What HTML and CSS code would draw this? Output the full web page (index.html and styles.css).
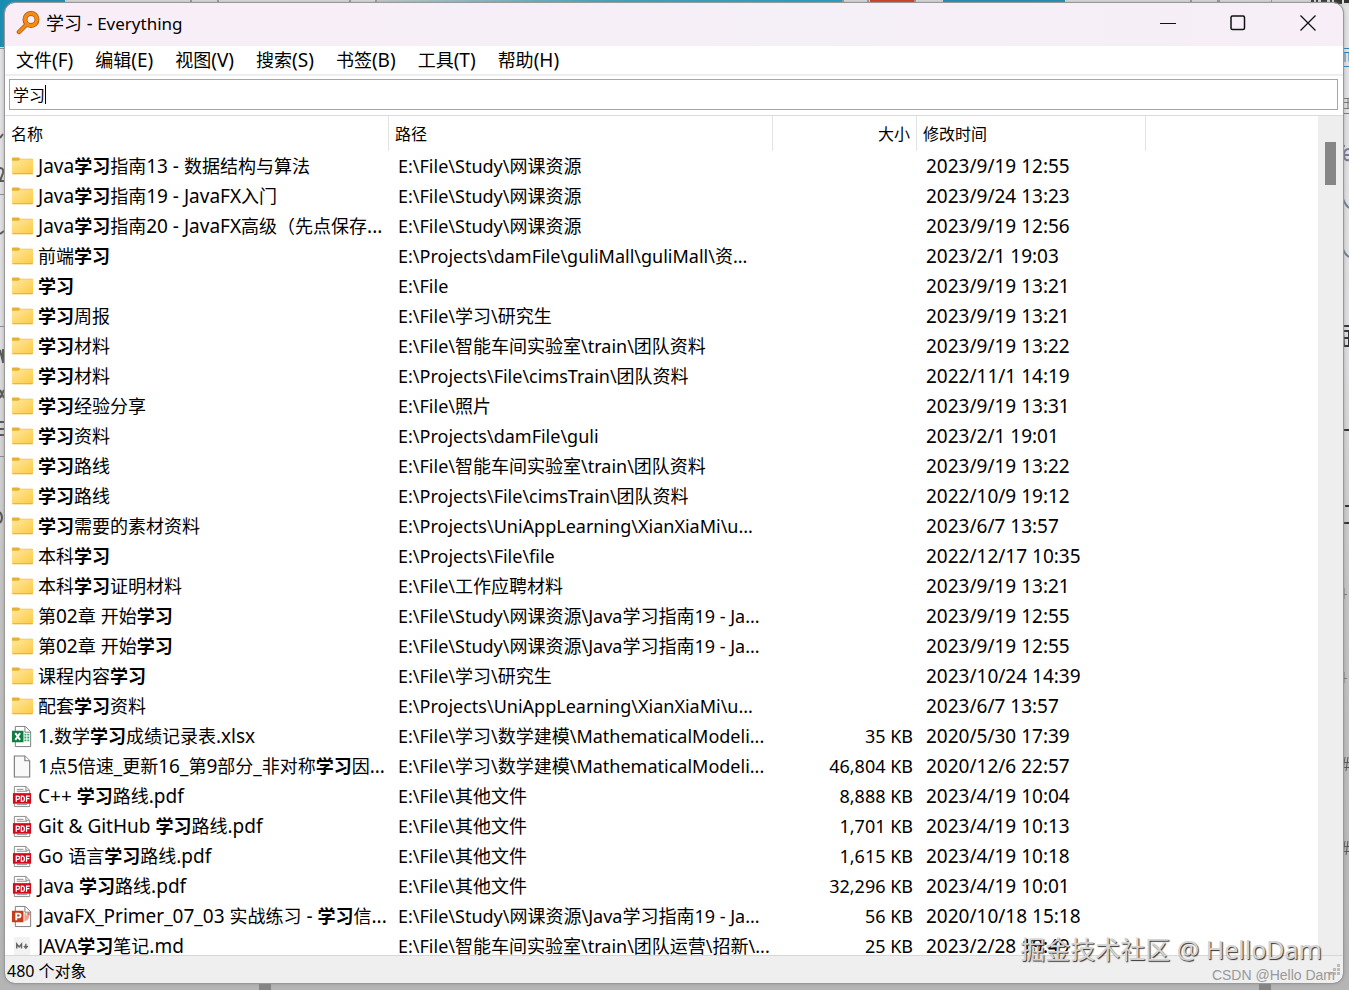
FILE: index.html
```html
<!DOCTYPE html>
<html lang="zh-CN">
<head>
<meta charset="utf-8">
<title>学习 - Everything</title>
<link rel="stylesheet" href="styles.css">
</head>
<body>
<svg class="edge edge-top" viewBox="0 0 1349 6" preserveAspectRatio="none" aria-hidden="true">
  <defs><linearGradient id="tab" x1="0" x2="1"><stop offset="0" stop-color="#c5ceca"/><stop offset=".5" stop-color="#39a4c0"/><stop offset="1" stop-color="#1c9cc4"/></linearGradient></defs>
  <path fill="#dcdcdc" d="M0 0h1349v6H0z"/>
  <path fill="#178db3" d="M0 0h65v6H0zM943 0h122v6H943z"/>
  <path fill="url(#tab)" d="M377 0h465v6H377z"/>
  <path fill="#d23a1b" d="M870 0h44v6h-44z"/>
  <path fill="#999" d="M190 0h2v6h-2zM217 0h2v6h-2zM349 0h2v6h-2zM375 0h2v6h-2zM842 0h2v6h-2zM867 0h2v6h-2zM914 0h2v6h-2zM1190 0h2v6h-2zM1217 0h3v6h-3zM1271 0h1v6h-1z"/>
  <path fill="#333" d="M1311 0h3v4h-3zM1316 0h2v4h-2zM1321 0h6v3h-6zM1330 0h2v5h-2zM1334 0h8v4h-8zM1344 0h5v3h-5z"/>
</svg>
<svg class="edge edge-left" width="8" height="990" aria-hidden="true">
  <path fill="#178db3" d="M0 0h8v47H0z"/>
  <path fill="none" stroke="#8a8d91" d="M0 48.500h5M0 194.500h5M0 326.500h5M0 456.500h5"/>
  <path fill="none" stroke="#555" stroke-width="2" d="M3 134l-3 4M0 168q4 0 3 5L0 181h5M4 231l-4 3M0 350l3 12M3 349v14M0 390l4 8M0 398l4-8M0 422h5M0 429h5M0 435h5M0 512q4 6 0 11"/>
</svg>
<svg class="edge edge-right" width="8" height="990" aria-hidden="true">
  <path fill="none" stroke="#2d7fb4" d="M1 48.500h7M2 52.500h6v9M4 53v9M2 66.500h6"/>
  <path fill="none" stroke="#777" d="M1 98.500h7M3 102.500h5M1 108.500h7M3 113.500h5M7 98v11"/>
  <path fill="none" stroke="#6f7a91" stroke-width="2" d="M1 146h3M8 149q-5 0-5 6t5 5M3 155h5M1 195q2 9 7 13M1 246q2 8 7 11"/>
  <path fill="none" stroke="#303238" stroke-width="2" d="M1 326h7M2 331h6v15H3zM3 338h5M1 430h7M4 506h4M3 523h5"/>
  <path fill="none" stroke="#777" d="M3 588v11M1 594.500h5M3 672v11M1 678.500h5"/>
  <path fill="none" stroke="#555" d="M4 757l-2 14M7 757l-2 14M1 762.500h7M1 767.500h7M4 841l-2 14M7 841l-2 14M1 846.500h7M1 851.500h7"/>
</svg>
<svg class="edge edge-bottom" viewBox="0 0 1349 8" preserveAspectRatio="none" aria-hidden="true">
  <path fill="#858585" d="M259 0h12v8h-12zM1259 0h12v8h-12z"/>
</svg>

<main class="window">
  <header class="titlebar">
    <svg class="logo" width="24" height="24" viewBox="0 0 24 24" aria-hidden="true">
      <path d="M3 21 10 14" stroke="#a3560f" stroke-width="4.500" stroke-linecap="round"/>
      <circle cx="15" cy="8.500" r="6" fill="none" stroke="#a3560f" stroke-width="5"/>
      <path d="M3 21 10.500 13.500" stroke="#f68a12" stroke-width="3" stroke-linecap="round"/>
      <circle cx="15" cy="8.500" r="6" fill="none" stroke="#f68a12" stroke-width="3.500"/>
    </svg>
    <h1 class="title">学习 - <span class="app">Everything</span></h1>
    <div class="controls">
      <button class="control" aria-label="最小化"><svg width="16" height="16"><path d="M0 8.500h16" stroke="#111"/></svg></button>
      <button class="control" aria-label="最大化"><svg width="16" height="16"><rect x="1" y="1" width="13.500" height="13.500" rx="1.500" fill="none" stroke="#111" stroke-width="1.500"/></svg></button>
      <button class="control" aria-label="关闭"><svg width="16" height="16"><path d="m.5.5 15 15m0-15-15 15" stroke="#111" stroke-width="1.300"/></svg></button>
    </div>
  </header>
  <nav class="menubar">
    <button class="menu">文件<span class="latin">(F)</span></button>
    <button class="menu">编辑<span class="latin">(E)</span></button>
    <button class="menu">视图<span class="latin">(V)</span></button>
    <button class="menu">搜索<span class="latin">(S)</span></button>
    <button class="menu">书签<span class="latin">(B)</span></button>
    <button class="menu">工具<span class="latin">(T)</span></button>
    <button class="menu">帮助<span class="latin">(H)</span></button>
  </nav>
  <div class="search">
    <input class="search-input" type="text" value="学习" aria-label="搜索">
    <span class="caret"></span>
  </div>
  <section class="results">
    <div class="list">
      <table class="files">
        <colgroup><col class="col-name"><col class="col-path"><col class="col-size"><col class="col-date"><col></colgroup>
        <thead><tr><th>名称</th><th>路径</th><th class="size">大小</th><th>修改时间</th><th class="rest"></th></tr></thead>
        <tbody id="rows"></tbody>
      </table>
    </div>
    <div class="scrollbar"><div class="thumb"></div></div>
  </section>
  <footer class="status">480 个对象
    <svg class="grip" width="12" height="12" aria-hidden="true"><path fill="#bbb" d="M8 0h3v3H8zM4 4h3v3H4zM8 4h3v3H8zM0 8h3v3H0zM4 8h3v3H4zM8 8h3v3H8z"/></svg>
  </footer>
</main>
<div class="mark mark-large">掘金技术社区 @ HelloDam</div>
<div class="mark mark-small">CSDN @Hello Dam</div>

<svg class="symbols" aria-hidden="true">
  <defs><linearGradient id="gold" x1="0" y1="0" x2="1" y2="1"><stop offset="0" stop-color="#ffe79c"/><stop offset="1" stop-color="#fccb45"/></linearGradient></defs>
  <symbol id="folder" viewBox="0 0 24 24">
    <path fill="#e9b02c" d="M1 3.500q0-1 1-1h6l1.500 1.500H22q1 0 1 1V18H1z"/>
    <path fill="url(#gold)" d="M1 6h7l1.500-1.500H23V19q0 1-1 1H2q-1 0-1-1z"/>
    <path fill="none" stroke="#e6ad32" d="M1.500 19.500h21"/>
  </symbol>
  <symbol id="file" viewBox="0 0 24 24">
    <path fill="#f9f9f9" stroke="#7b7b7b" stroke-width="1.200" d="M3.500 1h11l5 5v17h-16z"/>
    <path fill="#fff" stroke="#7b7b7b" stroke-width="1.200" d="M14.500 1v5h5"/>
  </symbol>
  <symbol id="xlsx" viewBox="0 0 24 24">
    <path fill="#fff" stroke="#7b7b7b" d="M4.500 1.500h10.500l5.500 5.500v15.500h-16z"/><path fill="none" stroke="#7b7b7b" d="M14.500 1.500v6h6"/>
    <path fill="#2fae72" d="M14 9h2v2h-2zM17 9h2v2h-2zM14 12h2v2h-2zM17 12h2v2h-2zM14 15h2v2h-2zM17 15h2v2h-2z"/>
    <path fill="#107c41" d="M1 6h12v12H1z"/><path fill="none" stroke="#fff" stroke-width="1.900" d="m4.500 8.500 5 7m0-7-5 7"/>
  </symbol>
  <symbol id="pptx" viewBox="0 0 24 24">
    <path fill="#fff" stroke="#7b7b7b" d="M4.500 1.500h10.500l5.500 5.500v15.500h-16z"/><path fill="none" stroke="#7b7b7b" d="M14.500 1.500v6h6"/>
    <path fill="#f3a28d" d="M14 9v8q5-1 5-6h-3V8z"/><path fill="#e26a4d" d="M17 8h2.500v3H17z"/>
    <path fill="#c43e1c" d="M1 6h12v12H1z"/><path fill="none" stroke="#fff" stroke-width="1.900" d="M5.500 16V9H8q2 0 2 2t-2 2H5.500"/>
  </symbol>
  <symbol id="pdf" viewBox="0 0 24 24">
    <path fill="#fff" stroke="#8a8a8a" d="M3.500 1.500h12l4 4v17h-16z"/><path fill="none" stroke="#8a8a8a" d="M15.500 1.500v4h4M6 4.500h7M6 6.500h11M6 20.500h11"/>
    <path fill="#d3091c" d="M2 8.500h19v11H2z"/>
    <path fill="none" stroke="#fff" stroke-width="1.300" d="M5.500 17.500v-6H7q2 0 2 1.800T7 15.100H5.500M10.800 11.500v5.500h1q2.200 0 2.200-2.700T11.800 11.500zM16.200 17.500v-6H19.500M16.200 14.300h3"/>
  </symbol>
  <symbol id="md" viewBox="0 0 24 24">
    <rect x="3" y="2" width="17" height="20" rx="2" fill="#f2f2f2"/>
    <path fill="none" stroke="#666" stroke-width="1.500" d="M6 14V9.500l2.500 3 2.500-3V14M15.500 9v4.500m-2-2 2 2.200 2-2.200"/>
  </symbol>
</svg>
<script src="rows.js"></script>
</body>
</html>
```
FILE: styles.css
```css
* { box-sizing: border-box; }
body {
  margin: 0;
  height: 100vh;
  display: flex;
  overflow: hidden;
  position: relative;
  background: linear-gradient(#e3e3e5 0, #dedee0 35%, #c4c4c4 60%, #b5b5b5 100%);
  color: #000;
  font-family: "Noto Sans", "Noto Sans CJK SC", sans-serif;
  font-size: 18px;
}
button, input { font: inherit; color: inherit; }
.latin { font-size: 19px; }
.symbols { position: absolute; width: 0; height: 0; }
.edge { position: absolute; top: 0; }
.edge-top { left: 0; width: 100%; height: 6px; }
.edge-left { left: 0; }
.edge-right { right: 0; }
.edge-bottom { top: auto; bottom: 0; left: 0; width: 100%; height: 8px; }

.window {
  position: relative;
  flex: 1;
  min-width: 0;
  margin: 3px 6px 7px 5px;
  display: flex;
  flex-direction: column;
  overflow: hidden;
  border-radius: 10px;
  background: #fff;
  outline: 1px solid #999;
  box-shadow: 0 0 4px #888;
}
.titlebar {
  flex: none;
  display: flex;
  align-items: center;
  height: 43px;
  padding: 0 0 3px 11px;
  background: linear-gradient(90deg, #f9eef7, #f5eff8 60%, #f7eef7);
}
.title { margin: 0 0 0 6px; font-size: 18px; font-weight: 400; line-height: 24px; }
.app { font-size: 17px; }
.controls { margin-left: auto; display: flex; }
.control {
  width: 70px;
  height: 40px;
  padding: 0;
  border: 0;
  background: none;
  display: grid;
  place-items: center;
}
.menubar {
  flex: none;
  display: flex;
  gap: 22px;
  height: 30px;
  padding-left: 11px;
  border-bottom: 2px solid #eee;
}
.menu { padding: 0; border: 0; background: none; line-height: 28px; white-space: nowrap; }
.search { flex: none; position: relative; padding: 3px 5px 5px 4px; }
.search-input {
  display: block;
  width: 100%;
  height: 31px;
  padding: 0 3px 2px;
  border: 1px solid #a6a6a6;
  background: #fff;
  font-size: 16px;
}
.caret { position: absolute; left: 40px; top: 9px; width: 1px; height: 19px; background: #000; }

.results { flex: 1; min-height: 0; display: flex; border-top: 1px solid #dadada; }
.list { flex: 1; min-width: 0; overflow: hidden; }
.files { width: 100%; table-layout: fixed; border-spacing: 0; }
.col-name, .col-path { width: 384px; }
.col-size { width: 144px; }
.col-date { width: 229px; }
th {
  height: 35px;
  padding: 0 6px 2px;
  border-right: 1px solid #e3e3e3;
  font-size: 16px;
  font-weight: 400;
  text-align: left;
}
th.rest { border: 0; }
td { height: 30px; padding: 0; line-height: 24px; white-space: nowrap; }
.name { display: flex; align-items: center; gap: 4px; height: 30px; padding-left: 6px; }
.icon { flex: none; width: 23px; height: 23px; }
.path { padding-left: 9px; }
.size { text-align: right; }
td.size { padding-right: 4px; }
.path .latin, .size .latin { font-size: 18px; }
.date { padding-left: 9px; }
.scrollbar { flex: none; width: 25px; padding: 26px 7px; background: #eee; }
.thumb { height: 43px; background: #868686; }
.status {
  flex: none;
  display: flex;
  align-items: center;
  justify-content: space-between;
  height: 28px;
  padding: 0 2px;
  border-top: 1px solid #d7d7d7;
  background: #efefef;
  font-size: 16px;
}
.mark { position: absolute; white-space: nowrap; }
.mark-large {
  right: 27px;
  bottom: 23px;
  font-size: 25px;
  line-height: 36px;
  color: #d4d4d4;
  text-shadow: 1px 1px 1px #333;
}
.mark-small {
  right: 14px;
  bottom: 6px;
  font-family: "Liberation Sans", sans-serif;
  font-size: 14px;
  line-height: 18px;
  color: #999;
}
```
FILE: rows.js
```js
// icon | name (matches between asterisks) | path | size | modified
const data = String.raw`
folder|Java*学习*指南13 - 数据结构与算法|E:\File\Study\网课资源||2023/9/19 12:55
folder|Java*学习*指南19 - JavaFX入门|E:\File\Study\网课资源||2023/9/24 13:23
folder|Java*学习*指南20 - JavaFX高级（先点保存...|E:\File\Study\网课资源||2023/9/19 12:56
folder|前端*学习*|E:\Projects\damFile\guliMall\guliMall\资...||2023/2/1 19:03
folder|*学习*|E:\File||2023/9/19 13:21
folder|*学习*周报|E:\File\学习\研究生||2023/9/19 13:21
folder|*学习*材料|E:\File\智能车间实验室\train\团队资料||2023/9/19 13:22
folder|*学习*材料|E:\Projects\File\cimsTrain\团队资料||2022/11/1 14:19
folder|*学习*经验分享|E:\File\照片||2023/9/19 13:31
folder|*学习*资料|E:\Projects\damFile\guli||2023/2/1 19:01
folder|*学习*路线|E:\File\智能车间实验室\train\团队资料||2023/9/19 13:22
folder|*学习*路线|E:\Projects\File\cimsTrain\团队资料||2022/10/9 19:12
folder|*学习*需要的素材资料|E:\Projects\UniAppLearning\XianXiaMi\u...||2023/6/7 13:57
folder|本科*学习*|E:\Projects\File\file||2022/12/17 10:35
folder|本科*学习*证明材料|E:\File\工作应聘材料||2023/9/19 13:21
folder|第02章 开始*学习*|E:\File\Study\网课资源\Java学习指南19 - Ja...||2023/9/19 12:55
folder|第02章 开始*学习*|E:\File\Study\网课资源\Java学习指南19 - Ja...||2023/9/19 12:55
folder|课程内容*学习*|E:\File\学习\研究生||2023/10/24 14:39
folder|配套*学习*资料|E:\Projects\UniAppLearning\XianXiaMi\u...||2023/6/7 13:57
xlsx|1.数学*学习*成绩记录表.xlsx|E:\File\学习\数学建模\MathematicalModeli...|35 KB|2020/5/30 17:39
file|1点5倍速_更新16_第9部分_非对称*学习*因...|E:\File\学习\数学建模\MathematicalModeli...|46,804 KB|2020/12/6 22:57
pdf|C++ *学习*路线.pdf|E:\File\其他文件|8,888 KB|2023/4/19 10:04
pdf|Git & GitHub *学习*路线.pdf|E:\File\其他文件|1,701 KB|2023/4/19 10:13
pdf|Go 语言*学习*路线.pdf|E:\File\其他文件|1,615 KB|2023/4/19 10:18
pdf|Java *学习*路线.pdf|E:\File\其他文件|32,296 KB|2023/4/19 10:01
pptx|JavaFX_Primer_07_03 实战练习 - *学习*信...|E:\File\Study\网课资源\Java学习指南19 - Ja...|56 KB|2020/10/18 15:18
md|JAVA*学习*笔记.md|E:\File\智能车间实验室\train\团队运营\招新\...|25 KB|2023/2/28 19:49
`.trim().split("\n");

// Latin runs are set one size larger than the Chinese text beside them.
const format = text => text
  .replace(/&/g, "&amp;")
  .replace(/[\x20-\x29\x2b-\x7e]+/g, '<span class="latin">$&</span>')
  .replace(/\*(.+?)\*/g, "<b>$1</b>");

document.getElementById("rows").innerHTML = data.map(line => {
  const [icon, name, path, size, date] = line.split("|");
  return `<tr>
    <td><div class="name"><svg class="icon"><use href="#${icon}"/></svg><span>${format(name)}</span></div></td>
    <td class="path">${format(path)}</td>
    <td class="size">${format(size)}</td>
    <td class="date">${format(date)}</td>
    <td></td>
  </tr>`;
}).join("");
```
